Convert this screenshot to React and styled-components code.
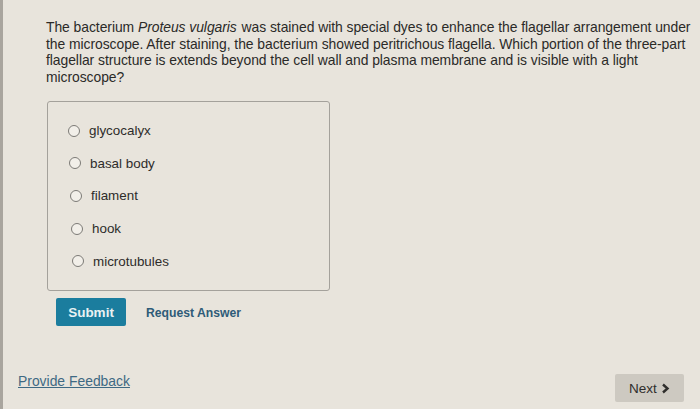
import React from "react";
import styled, { createGlobalStyle } from "styled-components";

const GlobalStyle = createGlobalStyle`
  html, body {
    margin: 0;
    padding: 0;
    background: #e7e3db;
  }
  body {
    font-family: "Liberation Sans", Arial, sans-serif;
  }
`;

const Page = styled.div`
  width: 700px;
  height: 409px;
  box-sizing: border-box;
  border-left: 3px solid #a9a59e;
  background: #e8e4dc;
  display: flex;
  flex-direction: column;
  overflow: hidden;
`;

const Main = styled.div`
  flex: 1;
  padding: 19px 0 0 43px;
`;

const Question = styled.p`
  margin: 0;
  width: 648px;
  font-size: 13.9px;
  line-height: 16.5px;
  color: #2b2a28;
  letter-spacing: -0.05px;
`;

const Emph = styled.em`
  font-style: italic;
  padding-right: 1px;
`;

const Choices = styled.div`
  margin: 16px 0 0 1px;
  width: 283px;
  height: 190px;
  box-sizing: border-box;
  border: 1px solid #a4a19b;
  border-radius: 3px;
  padding: 20px 0 0 20px;
  display: flex;
  flex-direction: column;
  gap: 15.7px;
`;

const Choice = styled.label`
  display: flex;
  align-items: center;
  gap: 9px;
  height: 17px;
  padding-left: ${(p) => p.indent}px;
  font-size: 13.4px;
  color: #2d2c2a;
`;

const Radio = styled.span`
  width: 10px;
  height: 10px;
  border: 1.6px solid #7c7a76;
  border-radius: 50%;
  background: #f2efe9;
  flex-shrink: 0;
`;

const Actions = styled.div`
  display: flex;
  align-items: center;
  gap: 20px;
  margin: 7px 0 0 10px;
`;

const SubmitButton = styled.button`
  width: 70px;
  height: 28px;
  border: none;
  border-radius: 2px;
  background: #1b7d9e;
  color: #e9f1f2;
  font-family: "Liberation Sans", Arial, sans-serif;
  font-weight: bold;
  font-size: 13.5px;
  padding: 0;
`;

const RequestLink = styled.span`
  font-size: 12.2px;
  font-weight: bold;
  color: #2e5b78;
  margin-top: 2px;
`;

const Footer = styled.div`
  display: flex;
  justify-content: space-between;
  align-items: center;
  padding: 0 16px 7px 15px;
`;

const Feedback = styled.span`
  font-size: 13.9px;
  color: #3e6983;
  text-decoration: underline;
  margin-top: -14px;
`;

const NextButton = styled.button`
  width: 69px;
  height: 28px;
  border: none;
  border-radius: 2px;
  background: #cdc9c1;
  color: #2f2e2c;
  font-family: "Liberation Sans", Arial, sans-serif;
  font-size: 13.5px;
  display: flex;
  align-items: center;
  justify-content: center;
  gap: 4px;
  padding: 0;
`;

const options = [
  { label: "glycocalyx", indent: 0 },
  { label: "basal body", indent: 1 },
  { label: "filament", indent: 2 },
  { label: "hook", indent: 3 },
  { label: "microtubules", indent: 4 },
];

export default function App() {
  return (
    <>
      <GlobalStyle />
      <Page>
        <Main>
          <Question>
            The bacterium <Emph>Proteus vulgaris</Emph> was stained with special dyes to enhance the
            flagellar arrangement under the microscope. After staining, the bacterium showed
            peritrichous flagella. Which portion of the three-part flagellar structure is extends
            beyond the cell wall and plasma membrane and is visible with a light microscope?
          </Question>
          <Choices>
            {options.map((o) => (
              <Choice key={o.label} indent={o.indent}>
                <Radio />
                {o.label}
              </Choice>
            ))}
          </Choices>
          <Actions>
            <SubmitButton>Submit</SubmitButton>
            <RequestLink>Request Answer</RequestLink>
          </Actions>
        </Main>
        <Footer>
          <Feedback>Provide Feedback</Feedback>
          <NextButton>
            Next
            <svg width="9" height="11" viewBox="0 0 9 11">
              <path d="M2 1.5 L6.5 5.5 L2 9.5" fill="none" stroke="#2f2e2c" strokeWidth="2.4" />
            </svg>
          </NextButton>
        </Footer>
      </Page>
    </>
  );
}
